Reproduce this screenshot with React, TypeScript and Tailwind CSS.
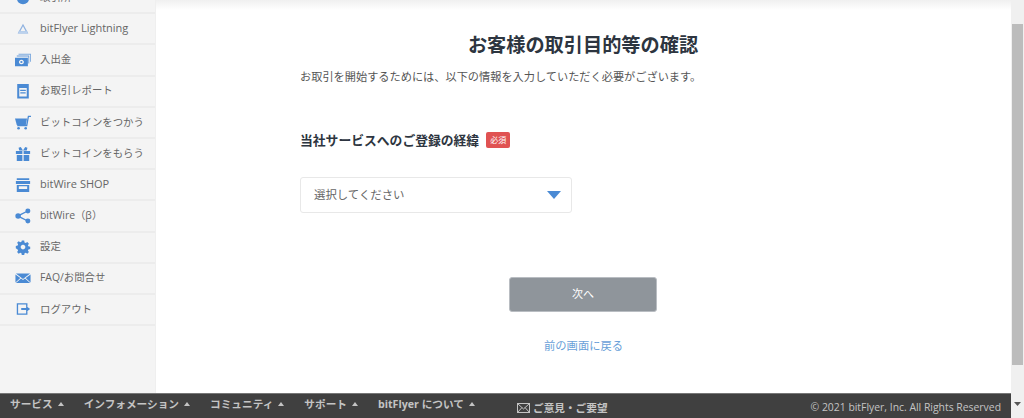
import React from "react";

const blue = "#4a8ad4";
const font = { fontFamily: '"Open Sans","Noto Sans CJK JP",sans-serif' };

const I = ({ children }: { children: React.ReactNode }) => (
  <svg width="16" height="16" viewBox="0 0 18 18" fill={blue} className="shrink-0">{children}</svg>
);

const icons: Record<string, React.ReactNode> = {
  info: <I><circle cx="9" cy="9" r="7" /></I>,
  tri: <I><path fillRule="evenodd" fill="#8fb2e0" d="M9 3 15 14H3ZM9 6 6 11.500h6Z" /><rect x="4" y="11.500" width="10" height="2.500" fill="#bcd2ee" /></I>,
  money: <I><path d="M4 2h14v9h-1V3H4Z" opacity=".7" /><path d="M2 4h14v9h-1V5H2Z" opacity=".85" /><path fillRule="evenodd" d="M0 6.500h14.500V16H0ZM7.200 8.800a2.800 2.500 0 1 0 .01 0Z" /><ellipse cx="7.200" cy="11.300" rx="1.300" ry="1.100" /></I>,
  report: <I><path fillRule="evenodd" d="M2.500 1h13v16.500h-13ZM4.800 5.500v9.800h8.400V5.500ZM6 8h6v1H6Z" /><path d="M6 7.500h6v1.200H6ZM6 10.500h6v1.200H6Z" /></I>,
  cart: <I><path d="M0 5h13.500l-1.300 7.500H2Z" /><path d="M12.500 12.500 14.500 2H18V3.500h-2.300L13.800 13.800H2.500v-1.300Z" /><circle cx="4" cy="16" r="1.500" /><circle cx="12" cy="16" r="1.500" /></I>,
  gift: <I><path d="M1 5.500h7.300V9H1ZM9.700 5.500H17V9H9.700ZM2 10h6.300v7H2ZM9.700 10H16v7H9.700Z" /><path d="M9 5 6.500 1 4 2l.8 3ZM9 5l2.500-4L14 2l-.8 3Z" /></I>,
  shop: <I><path d="M2 1.500h14v2H2ZM1 4.500h16V8H1Z" /><path fillRule="evenodd" d="M2 9h14v8H2ZM4.300 10.500v3h9.400v-3Z" /></I>,
  share: <I><circle cx="14.500" cy="3.500" r="2.800" /><circle cx="14.500" cy="14.500" r="2.800" /><circle cx="3.500" cy="9" r="3.100" /><path d="M3.500 8 14 2.800l.6 1.200L5 9l9.600 5-.6 1.200L3.500 10Z" /></I>,
  gear: <I><path fillRule="evenodd" d="M7.500 1h3l.4 2.300 1.500.7 2-1.300 2 2.100-1.300 1.900.6 1.500 2.300.4v3l-2.300.4-.6 1.500 1.300 1.900-2 2.100-2-1.300-1.500.7-.4 2.300h-3l-.4-2.300-1.500-.7-2 1.300-2-2.100 1.300-1.900-.6-1.500L0 10.600v-3l2.300-.4.6-1.500L1.600 3.800l2-2.100 2 1.300 1.500-.7ZM9 6.200a2.900 2.900 0 1 0 .01 0Z" transform="translate(.9 .9) scale(.9)" /></I>,
  mail: <I><path d="M1 4h16L9 10Z" /><path d="M.5 5v9l5.500-5ZM17.500 5v9L12 9ZM6.800 9.600 9 11.300l2.200-1.700 5.800 5H1Z" /></I>,
  logout: <I><path fillRule="evenodd" d="M2 2.500h12v4h-1.500V4h-9v10h9v-2.500H14v4H2Z" /><path d="M7 8h5.500V5.500L17 9l-4.500 3.500V10H7Z" /></I>,
};

const items: [string, string, boolean][] = [
  ["info", "取引所", true],
  ["tri", "bitFlyer Lightning", false],
  ["money", "入出金", true],
  ["report", "お取引レポート", true],
  ["cart", "ビットコインをつかう", true],
  ["gift", "ビットコインをもらう", true],
  ["shop", "bitWire SHOP", false],
  ["share", "bitWire（β）", true],
  ["gear", "設定", true],
  ["mail", "FAQ/お問合せ", true],
  ["logout", "ログアウト", true],
];

const foot = ["サービス", "インフォメーション", "コミュニティ", "サポート", "bitFlyer について"];

export default function App() {
  return (
    <div className="flex h-[418px] w-[1024px] overflow-hidden bg-white" style={font}>
      <div className="flex w-[1011px] shrink-0 flex-col">
        <div className="flex min-h-0 flex-1">
          <aside className="w-[156px] shrink-0 overflow-hidden border-r border-[#efefef] bg-[#f4f4f4]">
            <ul className="-mt-[17px]">
              {items.map(([k, t, cjk]) => (
                <li key={t} className="flex h-[31.200px] items-center border-b-2 border-[#ececec] pl-[15px] text-[#666]">
                  <span className="flex w-[25px] shrink-0 items-center">{icons[k]}</span>
                  <span className={cjk ? "text-[10.400px] whitespace-nowrap" : "pb-[1px] text-[11px] whitespace-nowrap"}>{t}</span>
                </li>
              ))}
            </ul>
          </aside>
          <main className="relative flex-1 pl-[144px]">
            <div className="absolute inset-x-0 top-0 h-[10px] bg-gradient-to-b from-[#f0f0f0] to-white" />
            <div className="flex w-[566px] flex-col">
              <h1 className="mt-[33px] text-center text-[19.200px] leading-[24px] font-bold text-[#2d3540]">お客様の取引目的等の確認</h1>
              <p className="mt-[11px] text-[11.200px] leading-[18px] text-[#555]">お取引を開始するためには、以下の情報を入力していただく必要がございます。</p>
              <div className="mt-[44px] flex items-center">
                <span className="text-[12.800px] leading-[20px] font-bold text-[#2d3540]">当社サービスへのご登録の経緯</span>
                <span className="ml-[7px] flex h-[16px] w-[24px] items-center justify-center rounded-[2px] bg-[#e05252] text-[8px] text-white">必須</span>
              </div>
              <div className="mt-[27px] flex h-[36px] w-[272px] items-center justify-between rounded-[3px] border border-[#e8e8e8] pr-[10px] pl-[13px] text-[11.400px] text-[#666]">
                <span>選択してください</span>
                <svg width="14" height="8" viewBox="0 0 14 8" fill={blue}><path d="M0 0h14L7 8Z" /></svg>
              </div>
              <button className="mt-[64px] ml-[209px] h-[35px] w-[148px] rounded-[3px] border border-[#b9bdc2] bg-[#8f959b] text-[11px] text-white">次へ</button>
              <a className="mt-[25px] ml-[244px] text-[11.300px] leading-[18px] text-[#6a9fd8]">前の画面に戻る</a>
            </div>
          </main>
        </div>
        <footer className="flex h-[25px] shrink-0 items-center gap-[20px] border-t border-[#777] bg-[#404040] pl-[10px] text-[10.670px] font-bold whitespace-nowrap text-[#c4c4c4]">
          {foot.map((f) => (
            <span key={f} className="flex items-center pb-[4px]">
              {f}
              <svg width="6" height="4" viewBox="0 0 6 4" fill="#c4c4c4" className="ml-[5px]"><path d="M0 4h6L3 0Z" /></svg>
            </span>
          ))}
          <span className="ml-[22px] flex items-center gap-[3px] pt-[3px]">
            <svg width="13" height="10" viewBox="0 0 13 10" fill="none" stroke="#c4c4c4" strokeWidth="1"><rect x=".5" y=".5" width="12" height="9" /><path d="M.5.500 6.500 6l6-5.500M.5 9.500 5 4.500M12.500 9.500 8 4.500" /></svg>
            ご意見・ご要望
          </span>
          <span className="ml-auto pt-[3px] pr-[10px] text-[10.400px] font-normal">© 2021 bitFlyer, Inc. All Rights Reserved</span>
        </footer>
      </div>
      <div className="flex w-[13px] shrink-0 flex-col bg-[#f0f0f0] pt-[24px] pb-[12px]">
        <div className="mx-[1px] h-[341px] bg-[#bcbcbc]" />
        <div className="mt-auto flex justify-center">
          <svg width="7" height="4" viewBox="0 0 7 4" fill="#555"><path d="M0 0h7L3.500 4Z" /></svg>
        </div>
      </div>
    </div>
  );
}
